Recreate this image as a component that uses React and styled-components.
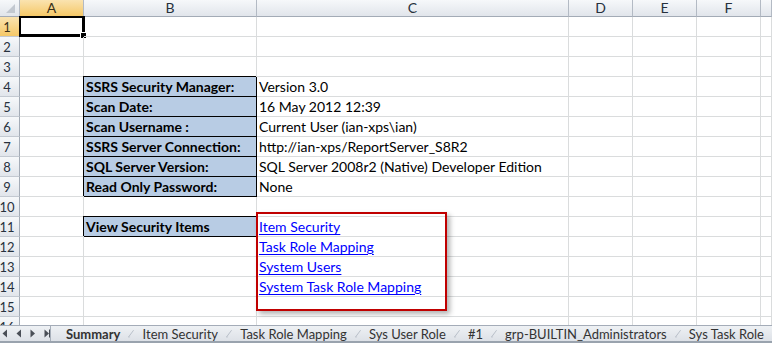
import React from "react";
import styled, { createGlobalStyle, css } from "styled-components";

const GlobalStyle = createGlobalStyle`
  html, body { margin: 0; padding: 0; background: #fff; }
  body { font-family: Lato, "Liberation Sans", sans-serif; overflow: hidden; }
`;

const COLUMNS = "20px 64px 173px 312px 64px 64px 64px 1fr";
const LETTERS = ["A", "B", "C", "D", "E", "F", ""];

const info = [
  ["SSRS Security Manager:", "Version 3.0"],
  ["Scan Date:", "16 May 2012 12:39"],
  ["Scan Username :", "Current User (ian-xps\\ian)"],
  ["SSRS Server Connection:", "http://ian-xps/ReportServer_S8R2"],
  ["SQL Server Version:", "SQL Server 2008r2 (Native) Developer Edition"],
  ["Read Only Password:", "None"],
];

const links = ["Item Security", "Task Role Mapping", "System Users", "System Task Role Mapping"];

const tabs = [
  "Summary",
  "Item Security",
  "Task Role Mapping",
  "Sys User Role",
  "#1",
  "grp-BUILTIN_Administrators",
  "Sys Task Role",
];

// builds the visible rows 1..16
const rows = Array.from({ length: 16 }, (_, i) => {
  const n = i + 1;
  let b = null;
  let c = null;
  if (n >= 4 && n <= 9) {
    b = info[n - 4][0];
    c = { text: info[n - 4][1] };
  }
  if (n === 11) b = "View Security Items";
  if (n >= 11 && n <= 14) c = { text: links[n - 11], link: true };
  return { n, b, c };
});

const Page = styled.div`
  width: 772px;
  height: 343px;
  display: flex;
  flex-direction: column;
  overflow: hidden;
`;

const Sheet = styled.div`
  position: relative;
  flex: 1;
  overflow: hidden;
`;

const Row = styled.div`
  display: grid;
  grid-template-columns: ${COLUMNS};
  height: ${(p) => (p.$header ? "17px" : "20px")};
`;

const headerBg = css`
  background: linear-gradient(#f6f8fa, #e1e5eb);
  color: #27313d;
  font-size: 14px;
`;

const selectedBg = css`
  background: linear-gradient(#fae3b0, #f5c867);
  color: #3a3018;
`;

const Corner = styled.div`
  ${headerBg};
  position: relative;
  border-right: 1px solid #b3bac4;
  border-bottom: 1px solid #a3abb6;
  box-sizing: border-box;

  &::after {
    content: "";
    position: absolute;
    right: 4px;
    bottom: 3px;
    border-style: solid;
    border-width: 0 0 9px 9px;
    border-color: transparent transparent #c2c8d0 transparent;
  }
`;

const ColHead = styled.div`
  ${headerBg};
  ${(p) => p.$selected && selectedBg};
  box-sizing: border-box;
  border-right: 1px solid #b3bac4;
  border-bottom: 1px solid ${(p) => (p.$selected ? "#e0a83c" : "#a3abb6")};
  display: flex;
  align-items: center;
  justify-content: center;
  line-height: 16px;
`;

const RowHead = styled.div`
  ${headerBg};
  ${(p) => p.$selected && selectedBg};
  box-sizing: border-box;
  border-right: 1px solid ${(p) => (p.$selected ? "#e0a83c" : "#a3abb6")};
  border-bottom: 1px solid #c3c9d1;
  display: flex;
  align-items: flex-end;
  justify-content: center;
  padding-right: 5px;
  font-size: 13px;
  line-height: 18px;
  overflow: hidden;
`;

const Cell = styled.div`
  position: relative;
  box-sizing: border-box;
  border-right: 1px solid #dadcdd;
  border-bottom: 1px solid #dadcdd;
  padding: 0 2px;
  display: flex;
  align-items: flex-end;
  white-space: nowrap;
  font-size: 14px;
  line-height: 18px;
  color: #000;

  ${(p) =>
    p.$label &&
    css`
      background: #b8cce4;
      border-color: #000;
      box-shadow: -1px -1px 0 #000;
      font-weight: 700;
    `}
`;

const Selection = styled.div`
  position: absolute;
  top: -1px;
  left: -1px;
  right: -2px;
  bottom: -1px;
  border-style: solid;
  border-color: #000;
  border-width: 2px 3px 3px 2px;
  pointer-events: none;

  &::after {
    content: "";
    position: absolute;
    right: -5px;
    bottom: -5px;
    width: 5px;
    height: 5px;
    background: #000;
    border: 1px solid #fff;
  }
`;

const Link = styled.a`
  color: #0000ff;
  text-decoration: underline;
  text-underline-offset: 2px;
`;

const Callout = styled.div`
  position: absolute;
  left: 256px;
  top: 212px;
  width: 191px;
  height: 99px;
  box-sizing: border-box;
  border: 2px solid #c00000;
  box-shadow: 3px 3px 5px rgba(0, 0, 0, 0.3);
  pointer-events: none;
`;

const TabBar = styled.div`
  height: 18px;
  box-sizing: border-box;
  border-top: 1px solid #a4acb8;
  border-bottom: 2px solid #9aa3ae;
  background: linear-gradient(#eef1f4, #dde1e7);
  display: flex;
  align-items: stretch;
  white-space: nowrap;
`;

const Nav = styled.div`
  width: 56px;
  box-sizing: border-box;
  border-right: 1px solid #a6aeb9;
  display: flex;
  align-items: center;
  gap: 8px;
  padding-left: 2px;
`;

const Tab = styled.div`
  display: flex;
  align-items: center;
  padding: 0 8px 0 ${(p) => (p.$active ? "15px" : "8px")};
  font-size: 13px;
  color: #333;
  font-weight: ${(p) => (p.$active ? 700 : 400)};
`;

const NavIcon = ({ dir, bar }) => (
  <svg width="6" height="9" viewBox="0 0 6 9">
    {dir === "left" ? (
      <path d="M5 0.5 L0.5 4.5 L5 8.5 Z" fill="#4a4f57" />
    ) : (
      <path d="M0.5 0.5 L5 4.5 L0.5 8.5 Z" fill="#4a4f57" />
    )}
    {bar && <rect x="5" y="0.5" width="1" height="8" fill="#4a4f57" />}
  </svg>
);

const Slant = () => (
  <svg width="12" height="15" viewBox="0 0 12 15">
    <path d="M1 14.5 L11 1" stroke="#8f99a7" strokeWidth="1" fill="none" />
    <path d="M0 14.5 L4 14.5" stroke="#b4bcc6" strokeWidth="1" />
  </svg>
);

export default function App() {
  return (
    <Page>
      <GlobalStyle />
      <Sheet>
        <Row $header>
          <Corner />
          {LETTERS.map((l, i) => (
            <ColHead key={i} $selected={l === "A"}>
              {l}
            </ColHead>
          ))}
        </Row>
        {rows.map((r) => (
          <Row key={r.n}>
            <RowHead $selected={r.n === 1}>{r.n}</RowHead>
            <Cell>{r.n === 1 && <Selection />}</Cell>
            <Cell $label={!!r.b}>{r.b}</Cell>
            <Cell>
              {r.c && (r.c.link ? <Link href="#">{r.c.text}</Link> : r.c.text)}
            </Cell>
            <Cell />
            <Cell />
            <Cell />
            <Cell />
          </Row>
        ))}
        <Callout />
      </Sheet>
      <TabBar>
        <Nav>
          <NavIcon dir="left" />
          <NavIcon dir="left" />
          <NavIcon dir="right" />
          <NavIcon dir="right" bar />
        </Nav>
        {tabs.map((t, i) => (
          <React.Fragment key={t}>
            <Tab $active={i === 0}>{t}</Tab>
            {i < tabs.length - 1 && <Slant />}
          </React.Fragment>
        ))}
      </TabBar>
    </Page>
  );
}
